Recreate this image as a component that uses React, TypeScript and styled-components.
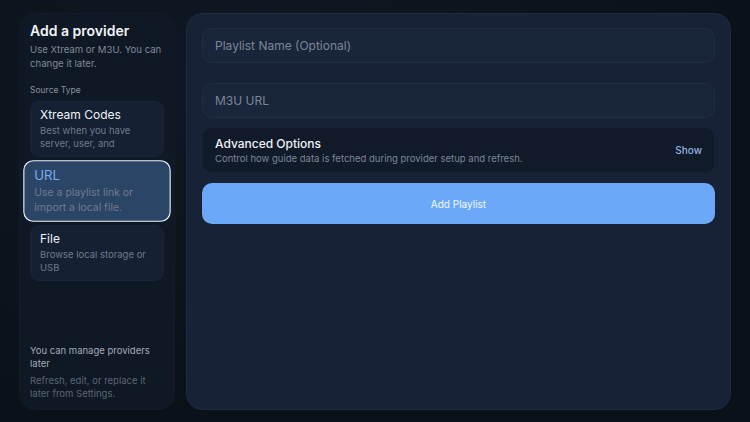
import styled, { createGlobalStyle } from 'styled-components';

const GlobalStyle = createGlobalStyle`
  html, body {
    margin: 0;
    padding: 0;
    background: #0a1119;
  }
  * {
    box-sizing: border-box;
  }
`;

const sources = [
  { id: 'xtream', title: 'Xtream Codes', desc: 'Best when you have server, user, and' },
  { id: 'url', title: 'URL', desc: 'Use a playlist link or import a local file.' },
  { id: 'file', title: 'File', desc: 'Browse local storage or USB' },
];

const App = () => {
  const selected = 'url';

  return (
    <>
      <GlobalStyle />
      <Page>
        <Sidebar>
          <Title>Add a provider</Title>
          <Subtitle>Use Xtream or M3U. You can change it later.</Subtitle>
          <SectionLabel>Source Type</SectionLabel>
          <SourceList>
            {sources.map((el) => (
              <SourceCard key={el.id} $active={el.id === selected}>
                <SourceTitle $active={el.id === selected}>{el.title}</SourceTitle>
                <SourceDesc>{el.desc}</SourceDesc>
              </SourceCard>
            ))}
          </SourceList>
          <Footer>
            <FooterTitle>You can manage providers later</FooterTitle>
            <FooterText>Refresh, edit, or replace it later from Settings.</FooterText>
          </Footer>
        </Sidebar>
        <MainPanel>
          <Field $gap={20}>Playlist Name (Optional)</Field>
          <Field $gap={9}>M3U URL</Field>
          <Advanced>
            <div>
              <AdvancedTitle>Advanced Options</AdvancedTitle>
              <AdvancedDesc>
                Control how guide data is fetched during provider setup and refresh.
              </AdvancedDesc>
            </div>
            <ShowButton>Show</ShowButton>
          </Advanced>
          <SubmitButton>Add Playlist</SubmitButton>
        </MainPanel>
      </Page>
    </>
  );
};

export default App;

const Page = styled.div`
  width: 750px;
  height: 422px;
  display: flex;
  gap: 11px;
  padding: 13px 19px 12px 19px;
  background: radial-gradient(ellipse at 30% 20%, #0f1823 0%, #0a1119 70%);
  font-family: Inter, 'Noto Sans', sans-serif;
`;

const Sidebar = styled.aside`
  width: 156px;
  flex-shrink: 0;
  display: flex;
  flex-direction: column;
  padding: 8px 6px 9px 10px;
  border-radius: 16px;
  background: #0f1825;
  border: 1px solid #111b29;
`;

const Title = styled.h1`
  margin: 0;
  font-size: 14px;
  font-weight: 600;
  line-height: 18px;
  color: #f1f4f8;
`;

const Subtitle = styled.p`
  margin: 3px 0 0;
  font-size: 9.6px;
  line-height: 14px;
  color: #7f8a9b;
`;

const SectionLabel = styled.div`
  margin-top: 13px;
  font-size: 8.5px;
  line-height: 12px;
  color: #8791a1;
`;

const SourceList = styled.div`
  margin-top: 5px;
  width: 134px;
  display: flex;
  flex-direction: column;
  gap: 6px;
`;

const SourceCard = styled.div<{ $active: boolean }>`
  height: 56px;
  padding: 5px 9px;
  border-radius: 9px;
  background: ${({ $active }) => ($active ? '#2b4566' : '#152033')};
  border: ${({ $active }) => ($active ? '1.8px solid #eef4fb' : '1px solid #18243a')};
  transform: ${({ $active }) => ($active ? 'scale(1.1)' : 'none')};
  position: relative;
  z-index: ${({ $active }) => ($active ? 1 : 0)};
`;

const SourceTitle = styled.div<{ $active: boolean }>`
  font-size: 12px;
  font-weight: 400;
  line-height: 16px;
  color: ${({ $active }) => ($active ? '#78aef2' : '#eef2f7')};
`;

const SourceDesc = styled.div`
  margin-top: 1px;
  font-size: 9.5px;
  line-height: 13px;
  color: #6f7b8c;
`;

const Footer = styled.div`
  margin-top: auto;
  padding-top: 8px;
`;

const FooterTitle = styled.div`
  font-size: 9.5px;
  line-height: 12.5px;
  color: #a3acb9;
`;

const FooterText = styled.div`
  margin-top: 5px;
  font-size: 9.5px;
  line-height: 12.5px;
  color: #5b6575;
`;

const MainPanel = styled.main`
  flex: 1;
  display: flex;
  flex-direction: column;
  padding: 14px 15px;
  border-radius: 16px;
  background: #172236;
  border: 1px solid #1d2a3f;
`;

const Field = styled.div<{ $gap: number }>`
  height: 35px;
  display: flex;
  align-items: center;
  padding: 0 12px;
  margin-bottom: ${({ $gap }) => $gap}px;
  border-radius: 10px;
  background: #19253a;
  border: 1px solid #202d43;
  font-size: 12px;
  color: #7b8698;
`;

const Advanced = styled.div`
  height: 46px;
  display: flex;
  align-items: center;
  justify-content: space-between;
  padding: 0 12px;
  margin-bottom: 10px;
  border-radius: 10px;
  background: #111a28;
  border: 1px solid #162132;
`;

const AdvancedTitle = styled.div`
  font-size: 12px;
  font-weight: 500;
  line-height: 15px;
  color: #eef2f7;
`;

const AdvancedDesc = styled.div`
  margin-top: 1px;
  font-size: 9.5px;
  line-height: 13px;
  color: #7b8698;
`;

const ShowButton = styled.span`
  font-size: 10px;
  font-weight: 500;
  color: #8fb3e0;
`;

const SubmitButton = styled.div`
  height: 41px;
  display: flex;
  align-items: center;
  justify-content: center;
  border-radius: 10px;
  background: #6ba9f8;
  font-size: 10px;
  font-weight: 400;
  color: #f4f8fe;
`;
